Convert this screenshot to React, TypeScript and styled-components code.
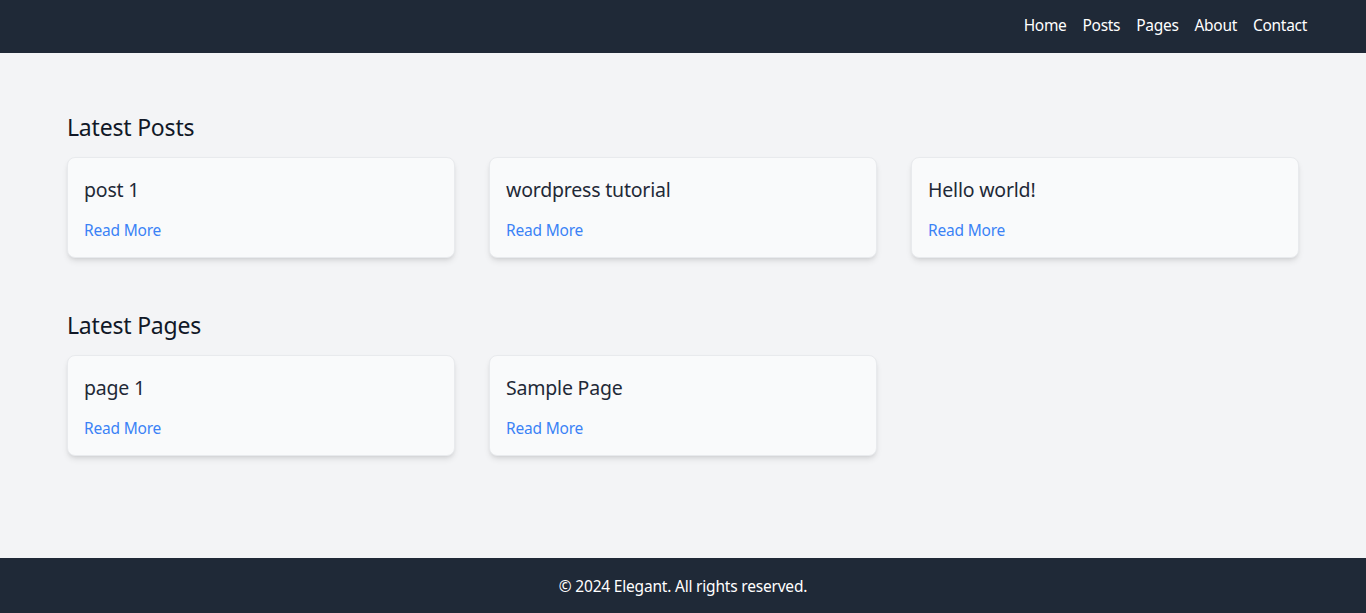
import React from "react";
import styled, { createGlobalStyle } from "styled-components";

const GlobalStyle = createGlobalStyle`
  * { box-sizing: border-box; }
  html, body { margin: 0; padding: 0; }
  body {
    font-family: "Noto Sans", "Open Sans", sans-serif;
    background: #f3f4f6;
    color: #1f2937;
  }
`;

const Page = styled.div`
  min-height: 100vh;
  display: flex;
  flex-direction: column;
`;

const Header = styled.header`
  background: #1f2937;
  height: 53px;
  display: flex;
  align-items: center;
  padding-bottom: 4px;
`;

const HeaderInner = styled.div`
  width: 1280px;
  margin: 0 auto;
  padding: 0 16px;
  display: flex;
  justify-content: flex-end;
`;

const Nav = styled.nav`
  display: flex;
  gap: 16px;
`;

const NavLink = styled.a`
  color: #ffffff;
  font-size: 15.5px;
  line-height: 24px;
  text-decoration: none;
  letter-spacing: -0.3px;
`;

const Main = styled.main`
  flex: 1;
  width: 1280px;
  margin: 0 auto;
  padding: 56px 24px 48px;
`;

const Section = styled.section`
  margin-bottom: 49px;
  &:last-child { margin-bottom: 0; }
`;

const SectionTitle = styled.h2`
  margin: 0 0 12px;
  font-size: 23px;
  line-height: 36px;
  font-weight: 400;
  color: #111827;
  letter-spacing: -0.2px;
`;

const Grid = styled.div`
  display: grid;
  grid-template-columns: repeat(3, 1fr);
  gap: 34px;
`;

const Card = styled.article`
  background: #f9fafb;
  border: 1px solid #e8eaed;
  border-radius: 8px;
  box-shadow: 0 4px 6px -1px rgba(0, 0, 0, 0.1), 0 2px 4px -2px rgba(0, 0, 0, 0.1);
  padding: 16px;
  height: 101px;
`;

const CardTitle = styled.h3`
  margin: 0 0 12px;
  font-size: 19.5px;
  line-height: 32px;
  font-weight: 400;
  color: #1f2937;
  letter-spacing: -0.2px;
`;

const ReadMore = styled.a`
  display: block;
  color: #3b82f6;
  font-size: 15.5px;
  line-height: 24px;
  text-decoration: none;
  letter-spacing: -0.2px;
`;

const Footer = styled.footer`
  background: #1f2937;
  height: 55px;
  display: flex;
  align-items: center;
  justify-content: center;
  color: #ffffff;
  font-size: 15.5px;
  letter-spacing: -0.2px;
`;

const posts = ["post 1", "wordpress tutorial", "Hello world!"];
const pages = ["page 1", "Sample Page"];

export default function App() {
  return (
    <>
      <GlobalStyle />
      <Page>
        <Header>
          <HeaderInner>
            <Nav>
              {["Home", "Posts", "Pages", "About", "Contact"].map((n) => (
                <NavLink key={n} href="#">{n}</NavLink>
              ))}
            </Nav>
          </HeaderInner>
        </Header>
        <Main>
          <Section>
            <SectionTitle>Latest Posts</SectionTitle>
            <Grid>
              {posts.map((p) => (
                <Card key={p}>
                  <CardTitle>{p}</CardTitle>
                  <ReadMore href="#">Read More</ReadMore>
                </Card>
              ))}
            </Grid>
          </Section>
          <Section>
            <SectionTitle>Latest Pages</SectionTitle>
            <Grid>
              {pages.map((p) => (
                <Card key={p}>
                  <CardTitle>{p}</CardTitle>
                  <ReadMore href="#">Read More</ReadMore>
                </Card>
              ))}
            </Grid>
          </Section>
        </Main>
        <Footer>© 2024 Elegant. All rights reserved.</Footer>
      </Page>
    </>
  );
}
